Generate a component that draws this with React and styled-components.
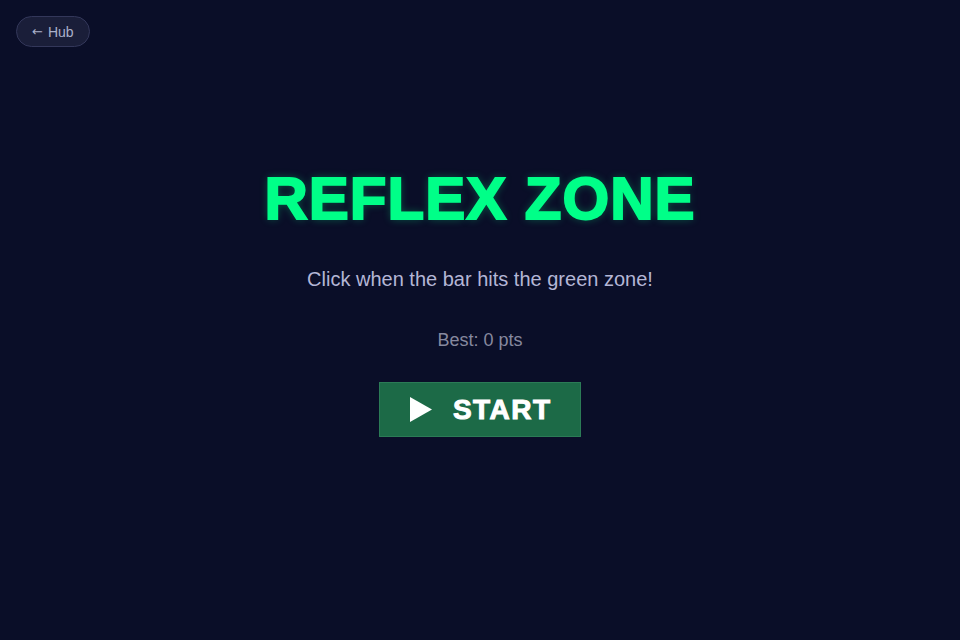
import React from 'react'
import styled, { createGlobalStyle } from 'styled-components'

const GlobalStyle = createGlobalStyle`
html, body {
  margin: 0;
  padding: 0;
  background-color: #0a0e28;
  font-family: "Liberation Sans", Arial, sans-serif;
}
`

const Page = styled.div`
width: 100%;
min-height: 640px;
background-color: #0a0e28;
display: flex;
flex-direction: column;
align-items: flex-start;
`

const TopBar = styled.div`
padding: 16px 0 0 16px;
`

const BackButton = styled.button`
height: 31px;
padding: 0 15px;
border-radius: 16px;
border: 1px solid #33375a;
background-color: #1a1e39;
color: #aab0ca;
font-family: "Liberation Sans", Arial, sans-serif;
font-size: 14px;
display: flex;
align-items: center;
gap: 5px;
cursor: pointer;
`

const Arrow = styled.span`
font-family: "DejaVu Sans", sans-serif;
font-size: 13px;
line-height: 1;
`

const Main = styled.div`
align-self: stretch;
display: flex;
flex-direction: column;
align-items: center;
padding-top: 122px;
`

const Title = styled.h1`
margin: 0;
font-size: 60px;
line-height: 60px;
font-weight: 700;
letter-spacing: 1px;
color: #00ff88;
-webkit-text-stroke: 2px #00ff88;
text-shadow: 0 0 8px rgba(0, 255, 136, 0.35);
`

const Subtitle = styled.p`
margin: 40px 0 0;
font-size: 20px;
line-height: 20px;
color: #b4b6d6;
`

const Best = styled.p`
margin: 42px 0 0;
font-size: 18px;
line-height: 18px;
color: #86889f;
`

const StartButton = styled.button`
margin-top: 33px;
width: 202px;
height: 55px;
border: 1px solid #2b7b56;
border-radius: 0;
background-color: #1c6a47;
color: #ffffff;
display: flex;
align-items: center;
justify-content: center;
gap: 21px;
font-family: "Liberation Sans", Arial, sans-serif;
font-size: 28px;
font-weight: 700;
letter-spacing: 1.5px;
cursor: pointer;
`

const Label = styled.span`
margin-right: -1.5px;
line-height: 1;
-webkit-text-stroke: 1px #ffffff;
`

function PlayIcon() {
    return (
        <svg width="22" height="25" viewBox="0 0 22 25">
            <path d="M0 0 L22 12.5 L0 25 Z" fill="#ffffff" />
        </svg>
    )
}

export default function App() {
    return (
        <Page>
            <GlobalStyle />
            <TopBar>
                <BackButton>
                    <Arrow>←</Arrow>
                    <span>Hub</span>
                </BackButton>
            </TopBar>
            <Main>
                <Title>REFLEX ZONE</Title>
                <Subtitle>Click when the bar hits the green zone!</Subtitle>
                <Best>Best: 0 pts</Best>
                <StartButton>
                    <PlayIcon />
                    <Label>START</Label>
                </StartButton>
            </Main>
        </Page>
    )
}
